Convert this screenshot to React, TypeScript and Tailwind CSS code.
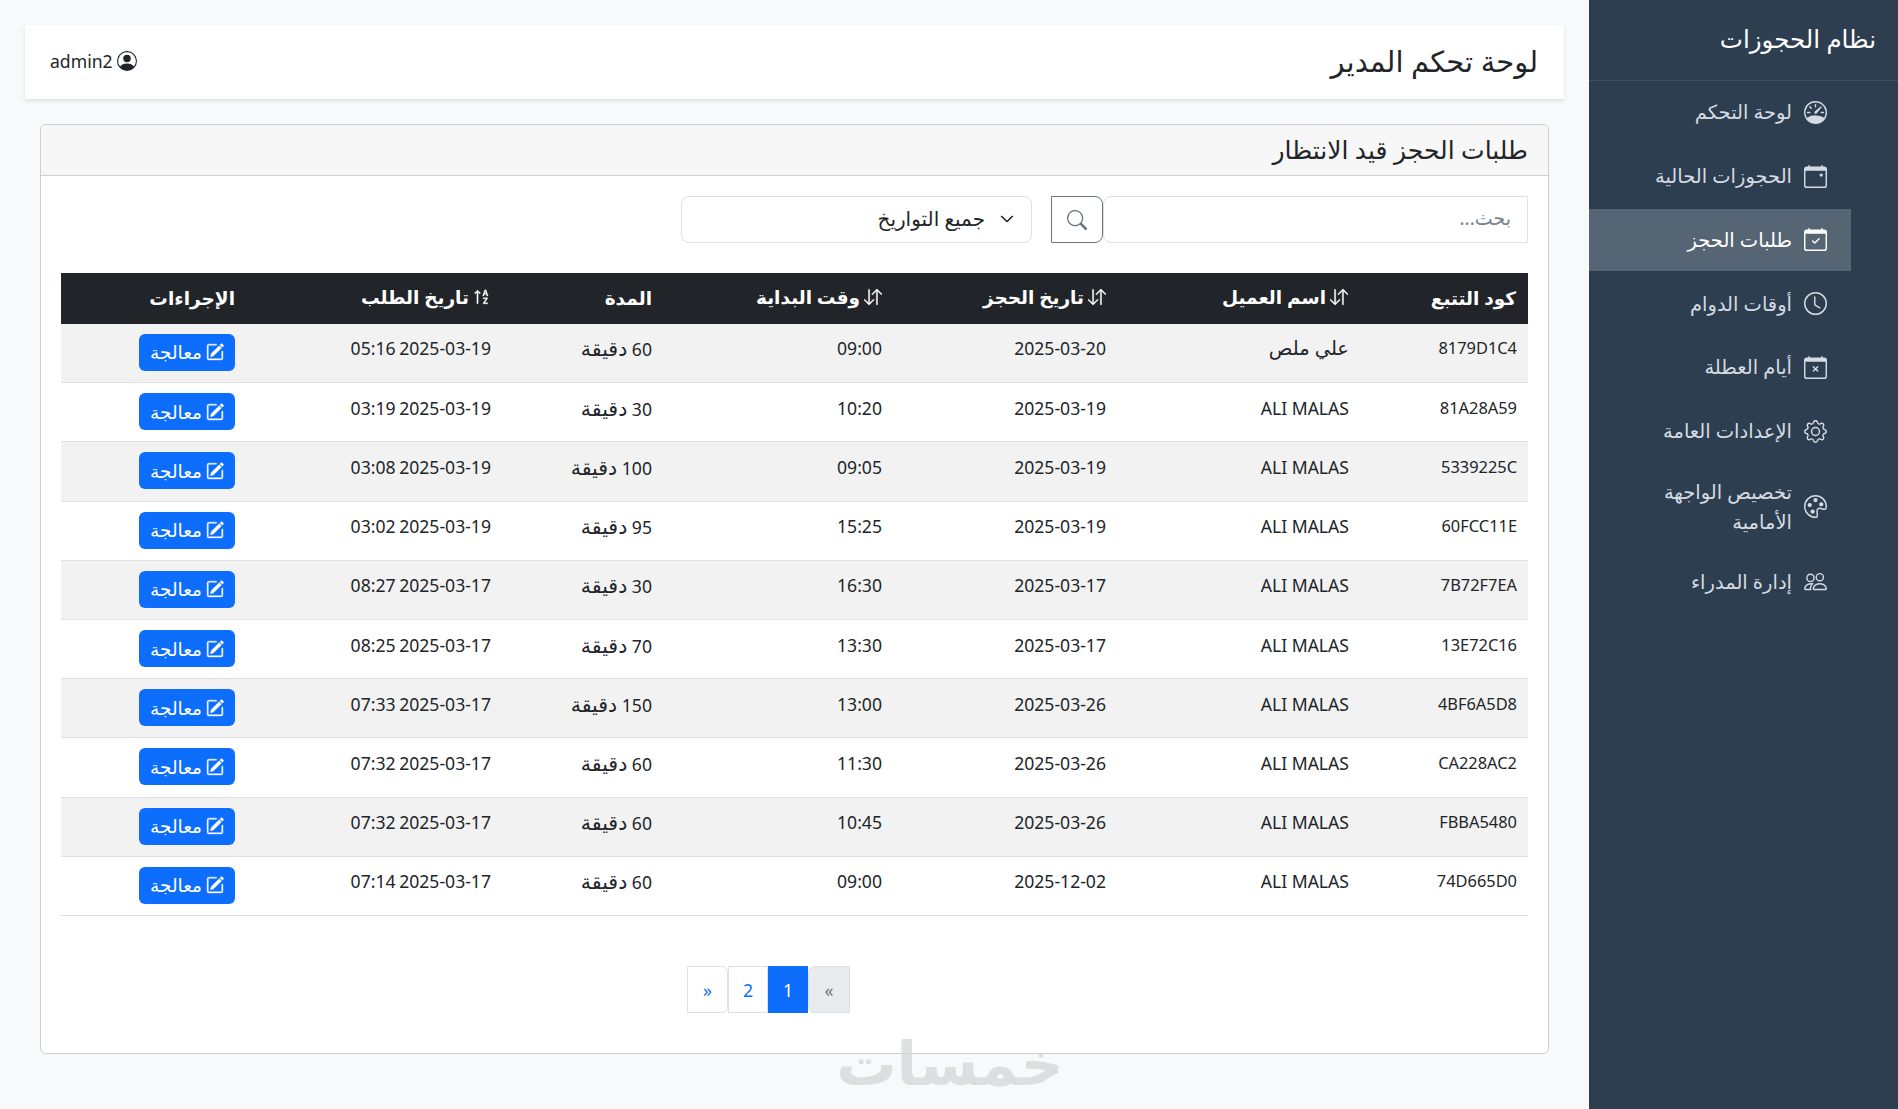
import React from "react";
import {
  BsSpeedometer, BsCalendarEvent, BsCalendarCheck, BsClock, BsCalendarX, BsGear, BsPalette, BsPeople,
  BsPersonCircle, BsSearch, BsChevronDown, BsArrowDownUp, BsSortAlphaUp, BsPencilSquare,
} from "react-icons/bs";

const font = "font-['Noto_Sans','DejaVu_Sans',sans-serif]";

const nav: { label: string; Icon: React.ComponentType<{ className?: string }>; active?: boolean; tall?: boolean }[] = [
  { label: "لوحة التحكم", Icon: BsSpeedometer },
  { label: "الحجوزات الحالية", Icon: BsCalendarEvent },
  { label: "طلبات الحجز", Icon: BsCalendarCheck, active: true },
  { label: "أوقات الدوام", Icon: BsClock },
  { label: "أيام العطلة", Icon: BsCalendarX },
  { label: "الإعدادات العامة", Icon: BsGear },
  { label: "تخصيص الواجهة الأمامية", Icon: BsPalette, tall: true },
  { label: "إدارة المدراء", Icon: BsPeople },
];

const rows = [
  ["8179D1C4", "علي ملص", "2025-03-20", "09:00", "60", "2025-03-19 05:16"],
  ["81A28A59", "ALI MALAS", "2025-03-19", "10:20", "30", "2025-03-19 03:19"],
  ["5339225C", "ALI MALAS", "2025-03-19", "09:05", "100", "2025-03-19 03:08"],
  ["60FCC11E", "ALI MALAS", "2025-03-19", "15:25", "95", "2025-03-19 03:02"],
  ["7B72F7EA", "ALI MALAS", "2025-03-17", "16:30", "30", "2025-03-17 08:27"],
  ["13E72C16", "ALI MALAS", "2025-03-17", "13:30", "70", "2025-03-17 08:25"],
  ["4BF6A5D8", "ALI MALAS", "2025-03-26", "13:00", "150", "2025-03-17 07:33"],
  ["CA228AC2", "ALI MALAS", "2025-03-26", "11:30", "60", "2025-03-17 07:32"],
  ["FBBA5480", "ALI MALAS", "2025-03-26", "10:45", "60", "2025-03-17 07:32"],
  ["74D665D0", "ALI MALAS", "2025-12-02", "09:00", "60", "2025-03-17 07:14"],
];

function Th({ children, w }: { children: React.ReactNode; w: string }) {
  return <th className={`${w} px-3 text-right font-bold text-[18.5px] text-white align-middle`}>{children}</th>;
}

function Sort({ label, alpha }: { label: string; alpha?: boolean }) {
  return (
    <span className="inline-flex items-center gap-1">
      {alpha ? <BsSortAlphaUp className="text-[18px]" strokeWidth={0.4} /> : <BsArrowDownUp className="text-[18px]" strokeWidth={0.4} />}
      <span>{label}</span>
    </span>
  );
}

const cell = "pl-3 pt-[12.5px] align-top leading-[24px]";

export default function App() {
  return (
    <div dir="rtl" className={`${font} flex h-[1109px] overflow-hidden bg-[#f8f9fa] text-[#212529]`}>
      <aside className="w-[309px] shrink-0 bg-[#2c3e50] text-white">
        <div className="h-[81px] border-b border-[#3c5066] px-[22px] pt-[23px] text-[24.5px] leading-[32px]">نظام الحجوزات</div>
        <nav className="pr-[47px]">
          {nav.map(({ label, Icon, active, tall }, i) => (
            <div
              key={i}
              className={`flex items-center gap-3 pr-[24px] mb-[1.3px] text-[19.5px] leading-[30px] ${tall ? "h-[85.5px]" : "h-[62.5px]"} ${active ? "bg-[#566573] text-white" : "text-[#d5dbe1]"}`}
            >
              <Icon className="text-[23px] shrink-0" />
              <span className="pl-4">{label}</span>
            </div>
          ))}
        </nav>
      </aside>

      <main className="flex-1 min-w-0 p-[25px] relative">
        <header className="h-[74px] bg-white shadow-[0_2px_4px_rgba(0,0,0,0.1)] flex items-center justify-between pr-[26px] pl-[25px]">
          <h1 className="text-[29px] leading-[40px] mb-[2px]">لوحة تحكم المدير</h1>
          <div className="flex items-center gap-1 text-[17.6px] mb-[2px]">
            <BsPersonCircle className="text-[20px]" />
            <span>admin2</span>
          </div>
        </header>

        <section className="mx-[15px] mt-[25px] h-[930px] rounded-[6px] border border-[#cfcfcf] bg-white">
          <div className="h-[51px] border-b border-[#cfcfcf] bg-[#f7f7f7] px-5 rounded-t-[6px] flex items-center text-[25px]">طلبات الحجز قيد الانتظار</div>
          <div className="px-5 pt-5">
            <div className="flex h-[47px] items-stretch">
              <div className="w-[425px] border border-[#dee2e6] rounded-l-[8px] flex items-center px-4 pb-[2px] text-[19px] text-[#7b838a]">بحث...</div>
              <button className="w-[52px] border border-[#6c757d] rounded-r-[8px] flex items-center justify-center text-[#6c757d]">
                <BsSearch className="text-[20px]" />
              </button>
              <div className="mr-[19px] w-[351px] border border-[#dee2e6] rounded-[8px] flex items-center gap-[15px] pr-[17px] pb-[2px] text-[20px]">
                <BsChevronDown className="text-[14px]" strokeWidth={1} />
                <span>جميع التواريخ</span>
              </div>
            </div>

            <table className="mt-[30px] w-full table-fixed border-collapse text-[17.6px]">
              <thead>
                <tr className="h-[50.6px] bg-[#212529]">
                  <Th w="w-[168px]">كود التتبع</Th>
                  <Th w="w-[242px]"><Sort label="اسم العميل" /></Th>
                  <Th w="w-[224px]"><Sort label="تاريخ الحجز" /></Th>
                  <Th w="w-[230px]"><Sort label="وقت البداية" /></Th>
                  <Th w="w-[161px]">المدة</Th>
                  <Th w="w-[256px]"><Sort label="تاريخ الطلب" alpha /></Th>
                  <Th w="w-[186px]">الإجراءات</Th>
                </tr>
              </thead>
              <tbody>
                {rows.map((r, i) => (
                  <tr key={i} className={`h-[59.2px] border-b border-[#dee2e6] ${i % 2 === 0 ? "bg-[#f2f2f2]" : "bg-white"}`}>
                    <td className={`${cell} pr-[11px] text-[16.4px]`}>{r[0]}</td>
                    <td className={`${cell} pr-[11px] ${i === 0 ? "text-[19.5px]" : ""}`}>{r[1]}</td>
                    <td className={`${cell} pr-3`}>{r[2]}</td>
                    <td className={`${cell} pr-3`}>{r[3]}</td>
                    <td className={`${cell} pr-3`}>{r[4]} <span className="text-[20.5px]">دقيقة</span></td>
                    <td className={`${cell} pr-3 [word-spacing:-1px]`}>{r[5]}</td>
                    <td className="px-3 pt-[10px] align-top">
                      <button className="h-[37px] w-[96px] rounded-[6px] bg-[#0d6efd] text-white text-[18.5px] leading-[24px] flex items-center justify-center gap-1">
                        <BsPencilSquare className="text-[18px] shrink-0" strokeWidth={0.4} />
                        <span>معالجة</span>
                      </button>
                    </td>
                  </tr>
                ))}
              </tbody>
            </table>

            <div className="mt-[50.5px] flex justify-center pr-[52px] text-[17.6px]">
              <div className="flex h-[47px]">
                <span className="w-[42px] flex items-center justify-center border border-[#dee2e6] rounded-l-[6px] bg-[#e9ecef] text-[#6c757d]">»</span>
                <span className="w-[40px] flex items-center justify-center bg-[#0d6efd] text-white">1</span>
                <span className="w-[40px] flex items-center justify-center border border-[#dee2e6] text-[#0d6efd] bg-white">2</span>
                <span className="w-[41px] flex items-center justify-center border border-[#dee2e6] rounded-r-[6px] text-[#0d6efd] bg-white">«</span>
              </div>
            </div>
          </div>
        </section>

        <div className="absolute left-[835px] top-[1022px] w-[230px] text-center text-[60px] leading-[80px] font-bold text-[#d2d4d6] opacity-70 pointer-events-none">خمسات</div>
      </main>
    </div>
  );
}
